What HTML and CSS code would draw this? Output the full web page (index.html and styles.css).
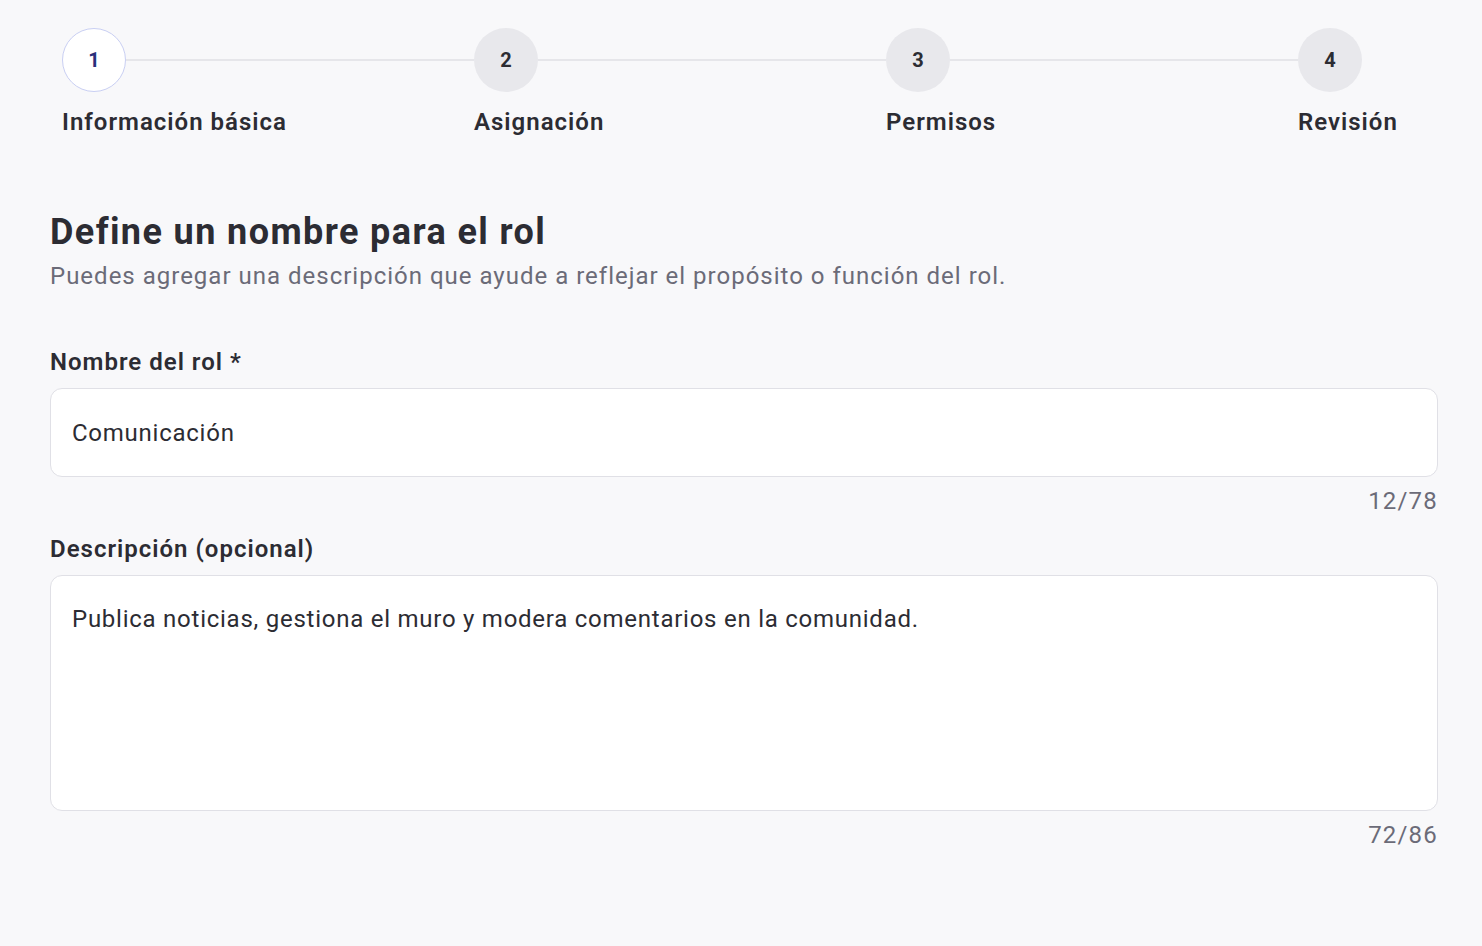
FILE: index.html
```html
<!DOCTYPE html>
<html lang="es">
<head>
<meta charset="utf-8">
<title>Nuevo rol</title>
<link rel="stylesheet" href="styles.css">
</head>
<body>
<div class="page">
  <div class="stepper">
    <div class="step">
      <div class="step-top"><div class="circle active">1</div><div class="line"></div></div>
      <div class="step-label">Información básica</div>
    </div>
    <div class="step">
      <div class="step-top"><div class="circle">2</div><div class="line"></div></div>
      <div class="step-label">Asignación</div>
    </div>
    <div class="step">
      <div class="step-top"><div class="circle">3</div><div class="line"></div></div>
      <div class="step-label">Permisos</div>
    </div>
    <div class="step last">
      <div class="step-top"><div class="circle">4</div></div>
      <div class="step-label">Revisión</div>
    </div>
  </div>

  <h1 class="title">Define un nombre para el rol</h1>
  <p class="subtitle">Puedes agregar una descripción que ayude a reflejar el propósito o función del rol.</p>

  <div class="field first">
    <label class="field-label">Nombre del rol *</label>
    <div class="box input-box">Comunicación</div>
    <div class="counter">12/78</div>
  </div>

  <div class="field">
    <label class="field-label">Descripción (opcional)</label>
    <div class="box textarea-box">Publica noticias, gestiona el muro y modera comentarios en la comunidad.</div>
    <div class="counter">72/86</div>
  </div>
</div>
</body>
</html>
```

FILE: styles.css
```css
* { box-sizing: border-box; }
html, body {
  margin: 0;
  background: #f8f8fa;
  font-family: Roboto, "Liberation Sans", Arial, sans-serif;
  color: #2c2c33;
}
.page {
  padding: 28px 44px 40px 50px;
}
.stepper {
  display: grid;
  grid-template-columns: 412px 412px 412px auto;
  padding-left: 12px;
}
.step-top {
  display: flex;
  align-items: center;
}
.circle {
  width: 64px;
  height: 64px;
  border-radius: 50%;
  background: #e8e8ec;
  display: flex;
  align-items: center;
  justify-content: center;
  font-size: 20px;
  font-weight: 700;
  color: #2c2c33;
  flex: none;
}
.circle.active {
  background: #ffffff;
  border: 1px solid #c9cff3;
  color: #2a2f7a;
}
.line {
  flex: 1;
  height: 2px;
  background: #e6e6ea;
}
.step-label {
  margin-top: 14px;
  font-size: 24px;
  line-height: 32px;
  font-weight: 600;
  letter-spacing: 1px;
  color: #2c2c33;
  white-space: nowrap;
}
.title {
  margin: 72px 0 0;
  font-size: 36px;
  line-height: 44px;
  font-weight: 700;
  letter-spacing: 1.4px;
  color: #2c2c33;
}
.subtitle {
  margin: 6px 0 0;
  font-size: 24px;
  line-height: 32px;
  color: #6b6b78;
  letter-spacing: 1px;
}
.field.first { margin-top: 56px; }
.field { margin-top: 20px; }
.field-label {
  display: block;
  font-size: 24px;
  line-height: 28px;
  font-weight: 600;
  letter-spacing: 1px;
  color: #2c2c33;
}
.box {
  margin-top: 12px;
  background: #ffffff;
  border: 1px solid #e0e0e6;
  border-radius: 12px;
  font-size: 24px;
  letter-spacing: 0.75px;
  color: #2c2c33;
  padding: 0 21px;
}
.input-box {
  height: 89px;
  display: flex;
  align-items: center;
}
.textarea-box {
  height: 236px;
  padding-top: 27px;
  line-height: 32px;
}
.counter {
  margin-top: 10px;
  text-align: right;
  font-size: 24px;
  line-height: 28px;
  letter-spacing: 1.2px;
  color: #6b6b78;
}
```
